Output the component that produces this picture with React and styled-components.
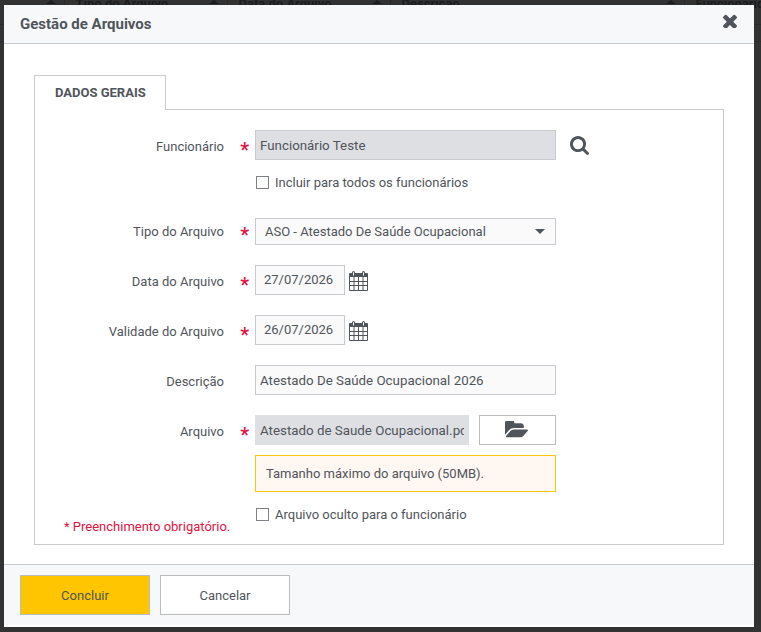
import React, { useState } from "react";
import styled, { createGlobalStyle } from "styled-components";

const GlobalStyle = createGlobalStyle`
  * {
    box-sizing: border-box;
  }

  body {
    margin: 0;
    background: #323232;
    color: #50555b;
    font-family: Roboto, "Liberation Sans", sans-serif;
    font-size: 13px;
  }

  select,
  button {
    font: inherit;
    color: inherit;
  }

  input {
    font-family: inherit;
    color: inherit;
  }
`;

const Page = styled.div`
  position: relative;
  min-height: 100vh;
  overflow: hidden;
`;

const Backdrop = styled.div`
  position: absolute;
  inset: 0;
  overflow: hidden;
`;

const BackTable = styled.table`
  width: 860px;
  table-layout: fixed;
  border-collapse: collapse;
  color: #1c1d1f;
  line-height: 16px;
`;

const BackHead = styled.th`
  position: relative;
  width: ${props => props.$width}px;
  height: 24px;
  padding: 0 0 0 11px;
  border-right: 1px solid #292929;
  border-bottom: 1px solid #292929;
  text-align: left;
  vertical-align: top;
  line-height: 8px;
`;

const BackCell = styled.td`
  height: 17px;
  padding: 0;
  border-bottom: 1px solid #292929;
`;

const SortArrow = styled.span`
  position: absolute;
  top: 0;
  right: 8px;
  border: 5px solid transparent;
  border-top: 0;
  border-bottom: 4px solid #1c1d1f;
`;

const Overlay = styled.div`
  position: relative;
  padding: 5px 7px 5px 4px;
`;

const Modal = styled.div`
  padding-bottom: 2px;
  background: #fff;
`;

const Header = styled.header`
  display: flex;
  align-items: center;
  justify-content: space-between;
  height: 39px;
  padding: 0 17px 0 16px;
  background: #f7f8fa;
  border-bottom: 1px solid #c9cad0;
`;

const Title = styled.h1`
  margin: 0;
  font-size: 15px;
  font-weight: 700;
`;

const IconButton = styled.button`
  display: flex;
  padding: 0;
  border: none;
  background: none;
  cursor: pointer;
`;

const CloseButton = styled(IconButton)`
  padding-bottom: 6px;
`;

const Content = styled.main`
  padding: 31px 30px 19px;
`;

const Tab = styled.button`
  position: relative;
  display: block;
  height: 35px;
  margin-bottom: -1px;
  padding: 0 19px 2px 20px;
  border: 1px solid #c9cad0;
  border-bottom: none;
  background: #fff;
  font-weight: 700;
`;

const Form = styled.form`
  display: flex;
  flex-direction: column;
  gap: 20px;
  padding: 20px 0 9px;
  border: 1px solid #c9cad0;
`;

const Row = styled.div`
  display: grid;
  grid-template-columns: 190px 30px minmax(0, 301px) auto;
  align-items: start;
`;

const Label = styled.label`
  padding: ${props => (props.$compact ? 6 : 9)}px 1px 0 0;
  line-height: 16px;
  text-align: right;
`;

const Star = styled.span`
  padding: ${props => (props.$compact ? 7 : 10)}px 6px 0 0;
  color: #e0143f;
  font-size: 20px;
  font-weight: 500;
  line-height: 20px;
  text-align: right;
`;

const Stack = styled.div`
  display: flex;
  flex-direction: column;
  gap: 10px;
`;

const Line = styled.div`
  display: flex;
  align-items: center;
  gap: ${props => props.$gap}px;
`;

const Input = styled.input`
  flex: 1;
  min-width: 0;
  height: 30px;
  padding: 0 4px;
  border: 1px solid #c9cad0;
  border-radius: 0;
  background: #fafafa;
  outline: none;

  &:read-only {
    background: #dedfe3;
  }
`;

const DateInput = styled(Input)`
  flex: none;
  width: 90px;
  padding: 0 8px 1px;
  font-size: 13px;
`;

const FileInput = styled(Input)`
  border-color: #dedfe3;
`;

const SelectBox = styled.div`
  position: relative;
`;

const Select = styled.select`
  display: block;
  width: 100%;
  height: 27px;
  padding: 0 30px 0 9px;
  border: 1px solid #c9cad0;
  border-radius: 0;
  background: #fafafa;
  appearance: none;
  outline: none;
`;

const Caret = styled.svg`
  position: absolute;
  top: 11px;
  right: 11px;
  width: 10px;
  height: 5px;
  fill: #50555b;
  pointer-events: none;
`;

const Check = styled.label`
  display: flex;
  align-items: center;
  gap: 6px;
  height: 28px;
  padding-bottom: 4px;
`;

const CheckBox = styled.input`
  width: 13px;
  height: 13px;
  margin: 0 0 0 1px;
  border: 1px solid #808187;
  border-radius: 0;
  background: #fff;
  appearance: none;

  &:checked {
    background: #808187;
    box-shadow: inset 0 0 0 2px #fff;
  }
`;

const SearchButton = styled(IconButton)`
  padding: 6px 0 0 14px;
`;

const CalendarButton = styled(IconButton)`
  padding-top: 2px;
`;

const FileButton = styled.button`
  display: flex;
  align-items: center;
  justify-content: center;
  width: 77px;
  height: 30px;
  padding: 0 2px 2px 0;
  border: 1px solid #bbbcbc;
  background: #fff;
  cursor: pointer;
`;

const Notice = styled.p`
  margin: 0;
  padding: 10px;
  border: 1px solid #fdc60a;
  background: #fff7f2;
  line-height: 15px;
`;

const LastRow = styled.div`
  display: grid;
  grid-template-columns: 220px minmax(0, 301px);
  margin-top: -10px;
`;

const Required = styled.p`
  margin: 0;
  padding: 17px 0 0 29px;
  color: #e0143f;
  line-height: 16px;
`;

const Footer = styled.footer`
  display: flex;
  gap: 10px;
  padding: 10px 16px;
  background: #f7f8fa;
  border-top: 1px solid #c9cad0;
`;

const Button = styled.button`
  width: 130px;
  height: 40px;
  border: 1px solid #bbbcbc;
  background: ${props => (props.$primary ? "#ffc600" : "#fff")};
  cursor: pointer;
`;

const icons = {
  close: {
    box: "302 302 1188 1188",
    width: 14,
    height: 14,
    path:
      "M1490 1322q0 40-28 68l-136 136q-28 28-68 28t-68-28l-294-294-294 294q-28 28-68 28t-68-28l-136-136q-28-28-28-68t28-68l294-294-294-294q-28-28-28-68t28-68l136-136q28-28 68-28t68 28l294 294 294-294q28-28 68-28t68 28l136 136q28 28 28 68t-28 68l-294 294 294 294q28 28 28 68z"
  },
  search: {
    box: "64 128 1664 1664",
    width: 19,
    height: 19,
    path:
      "M1216 832q0-185-131.5-316.5t-316.5-131.5-316.5 131.5-131.5 316.5 131.5 316.5 316.5 131.5 316.5-131.5 131.5-316.5zm512 832q0 52-38 90t-90 38q-54 0-90-38l-343-342q-179 124-399 124-143 0-273.5-55.5t-225-150-150-225-55.5-273.5 55.5-273.5 150-225 225-150 273.5-55.5 273.5 55.5 225 150 150 225 55.5 273.5q0 220-124 399l343 343q37 37 37 90z"
  },
  calendar: {
    box: "0 0 19 20",
    width: 19,
    height: 20,
    path:
      "M1 2h2V1.500Q3 0 4.500 0T6 1.500V2h7V1.500Q13 0 14.500 0T16 1.500V2h2q1 0 1 1v16q0 1-1 1H1q-1 0-1-1V3q0-1 1-1z M4 1.200V4.500h1V1.200z M14 1.200V4.500h1V1.200z M1 6v4h3.500V6z M5.500 6v4H9V6z M10 6v4h3.500V6z M14.500 6v4H18V6z M1 11v3h3.500v-3z M5.500 11v3H9v-3z M10 11v3h3.500v-3z M14.500 11v3H18v-3z M1 15v4h3.500v-4z M5.500 15v4H9v-4z M10 15v4h3.500v-4z M14.500 15v4H18v-4z"
  },
  folder: {
    box: "0 256 1879 1280",
    width: 23,
    height: 17,
    path:
      "M1879 952q0 31-31 66l-336 396q-43 51-120.5 86.5t-143.5 35.5h-1088q-34 0-60.5-13t-26.5-43q0-31 31-66l336-396q43-51 120.5-86.5t143.5-35.5h1088q34 0 60.5 13t26.5 43zm-343-344v160h-832q-94 0-197 47.5t-164 119.5l-337 396-5 6q0-4-.5-12.5t-.5-12.5v-960q0-92 66-158t158-66h320q92 0 158 66t66 158v32h544q92 0 158 66t66 158z"
  }
};

const Icon = ({ name }) => {
  const { box, width, height, path } = icons[name];

  return (
    <svg
      viewBox={box}
      width={width}
      height={height}
      fill="#50555b"
      fillRule="evenodd"
      aria-hidden="true"
    >
      <path d={path} />
    </svg>
  );
};

const columns = [
  { name: "", width: 64 },
  { name: "Tipo do Arquivo", width: 163 },
  { name: "Data do Arquivo", width: 163 },
  { name: "Descrição", width: 294 },
  { name: "Funcionário", width: 176 }
];

const DateField = ({ id, label, value, onChange }) => (
  <Row>
    <Label htmlFor={id}>{label}</Label>
    <Star>*</Star>
    <Line $gap={4}>
      <DateInput id={id} type="text" value={value} onChange={e => onChange(e.target.value)} />
      <CalendarButton type="button" aria-label={label}>
        <Icon name="calendar" />
      </CalendarButton>
    </Line>
  </Row>
);

const App = () => {
  const [date, setDate] = useState("27/07/2026");
  const [validity, setValidity] = useState("26/07/2026");
  const [description, setDescription] = useState("Atestado De Saúde Ocupacional 2026");

  return (
    <Page>
      <GlobalStyle />
      <Backdrop aria-hidden="true">
        <BackTable>
          <thead>
            <tr>
              {columns.map(column => (
                <BackHead key={column.name} $width={column.width}>
                  {column.name}
                  <SortArrow />
                </BackHead>
              ))}
            </tr>
          </thead>
          <tbody>
            <tr>
              <BackCell colSpan={5} />
            </tr>
          </tbody>
        </BackTable>
      </Backdrop>
      <Overlay>
        <Modal role="dialog" aria-labelledby="title">
          <Header>
            <Title id="title">Gestão de Arquivos</Title>
            <CloseButton type="button" aria-label="Fechar">
              <Icon name="close" />
            </CloseButton>
          </Header>
          <Content>
            <Tab type="button">DADOS GERAIS</Tab>
            <Form id="form" onSubmit={e => e.preventDefault()}>
              <Row>
                <Label htmlFor="employee">Funcionário</Label>
                <Star>*</Star>
                <Stack>
                  <Line>
                    <Input id="employee" type="text" value="Funcionário Teste" readOnly />
                  </Line>
                  <Check>
                    <CheckBox type="checkbox" />
                    Incluir para todos os funcionários
                  </Check>
                </Stack>
                <SearchButton type="button" aria-label="Buscar">
                  <Icon name="search" />
                </SearchButton>
              </Row>
              <Row>
                <Label $compact htmlFor="type">
                  Tipo do Arquivo
                </Label>
                <Star $compact>*</Star>
                <SelectBox>
                  <Select id="type">
                    <option>ASO - Atestado De Saúde Ocupacional</option>
                  </Select>
                  <Caret viewBox="0 0 10 5">
                    <path d="M0 0h10L5 5z" />
                  </Caret>
                </SelectBox>
              </Row>
              <DateField id="date" label="Data do Arquivo" value={date} onChange={setDate} />
              <DateField
                id="validity"
                label="Validade do Arquivo"
                value={validity}
                onChange={setValidity}
              />
              <Row>
                <Label htmlFor="description">Descrição</Label>
                <span />
                <Line>
                  <Input
                    id="description"
                    type="text"
                    value={description}
                    onChange={e => setDescription(e.target.value)}
                  />
                </Line>
              </Row>
              <Row>
                <Label htmlFor="file">Arquivo</Label>
                <Star>*</Star>
                <Stack>
                  <Line $gap={10}>
                    <FileInput
                      id="file"
                      type="text"
                      value="Atestado de Saude Ocupacional.pdf"
                      readOnly
                    />
                    <FileButton type="button" aria-label="Arquivo">
                      <Icon name="folder" />
                    </FileButton>
                  </Line>
                  <Notice>Tamanho máximo do arquivo (50MB).</Notice>
                </Stack>
              </Row>
              <LastRow>
                <Required>* Preenchimento obrigatório.</Required>
                <Check>
                  <CheckBox type="checkbox" />
                  Arquivo oculto para o funcionário
                </Check>
              </LastRow>
            </Form>
          </Content>
          <Footer>
            <Button $primary type="submit" form="form">
              Concluir
            </Button>
            <Button type="button">Cancelar</Button>
          </Footer>
        </Modal>
      </Overlay>
    </Page>
  );
};

export default App;
